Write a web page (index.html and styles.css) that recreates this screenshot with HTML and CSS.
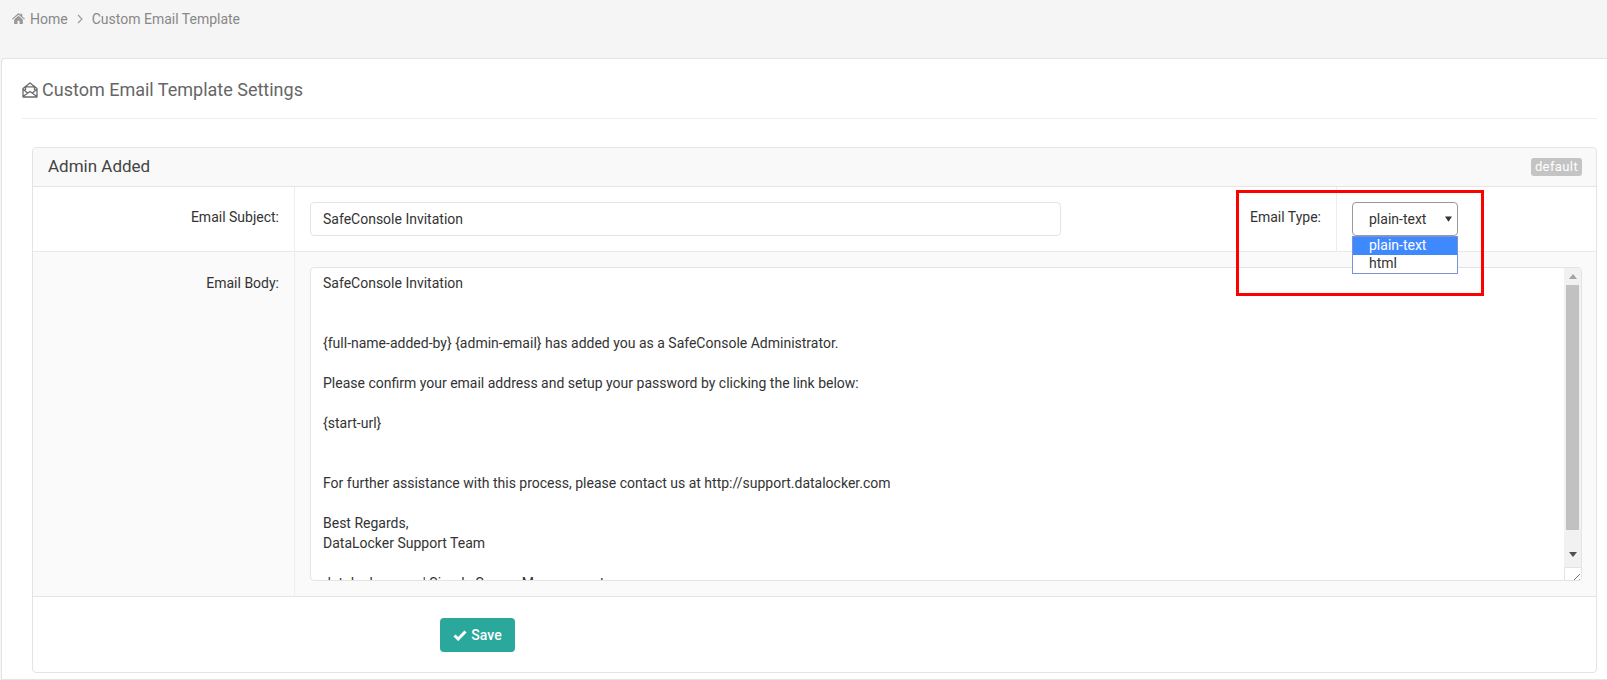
FILE: index.html
```html
<!DOCTYPE html>
<html lang="en">
<head>
<meta charset="utf-8">
<title>Custom Email Template</title>
<link rel="stylesheet" href="styles.css">
</head>
<body>
<nav class="breadcrumb">
  <svg class="home-icon" viewBox="0 0 24 20" width="13" height="11"><path fill="#999" d="M12 0 L15.5 3 V1 H19 V6.2 L24 10.5 L22.6 12 L12 3 L1.4 12 L0 10.5 Z M4 12 L12 5 L20 12 V20 H14 V14 H10 V20 H4 Z"/></svg>
  <span>Home</span>
  <svg class="chevron" viewBox="0 0 6 10" width="6" height="10"><path fill="none" stroke="#999" stroke-width="1.1" d="M1 1 L5 5 L1 9"/></svg>
  <span>Custom Email Template</span>
</nav>
<main class="card">
  <h1 class="page-title">
    <svg class="mail-icon" viewBox="0 0 16 16" width="16" height="16"><path fill="none" stroke="#6a6a6a" stroke-width="1.3" stroke-linejoin="round" d="M1 6.5 L8 1 L15 6.5 V15 H1 Z M3.5 8 V4.8 H12.5 V8 M1 14.5 L8 9.5 L15 14.5 M1 7 L5.5 11 M15 7 L10.5 11"/></svg>
    <span>Custom Email Template Settings</span>
  </h1>
  <section class="panel">
    <header class="panel-head">
      <span class="panel-title">Admin Added</span>
      <span class="badge">default</span>
    </header>
    <div class="row row-subject">
      <label class="label-col label-subject">Email Subject:</label>
      <div class="field-col subject-col">
        <div class="input">SafeConsole Invitation</div>
        <div class="type-label">Email Type:</div>
        <div class="type-field">
          <div class="select"><span>plain-text</span><svg class="caret" viewBox="0 0 8 6" width="7" height="6"><path fill="#333" d="M0 0 H8 L4 6 Z"/></svg>
            <ul class="options">
              <li class="option selected">plain-text</li>
              <li class="option">html</li>
            </ul>
          </div>
        </div>
        <div class="highlight"></div>
      </div>
    </div>
    <div class="row row-body">
      <label class="label-col label-body shaded">Email Body:</label>
      <div class="field-col shaded">
        <div class="textarea">
          <div class="text">
            <p>SafeConsole Invitation</p>
            <p>&nbsp;</p>
            <p>&nbsp;</p>
            <p>{full-name-added-by} {admin-email} has added you as a SafeConsole Administrator.</p>
            <p>&nbsp;</p>
            <p>Please confirm your email address and setup your password by clicking the link below:</p>
            <p>&nbsp;</p>
            <p>{start-url}</p>
            <p>&nbsp;</p>
            <p>&nbsp;</p>
            <p>For further assistance with this process, please contact us at http://support.datalocker.com</p>
            <p>&nbsp;</p>
            <p>Best Regards,</p>
            <p>DataLocker Support Team</p>
            <p>&nbsp;</p>
            <p>datalocker.com | Simple Secure Management</p>
          </div>
          <div class="scrollbar">
            <svg class="arrow" viewBox="0 0 8 5" width="8" height="5"><path fill="#a3a3a3" d="M4 0 L8 5 H0 Z"/></svg>
            <div class="thumb"></div>
            <svg class="arrow arrow-down" viewBox="0 0 8 5" width="8" height="5"><path fill="#505050" d="M0 0 H8 L4 5 Z"/></svg>
            <div class="resizer"><svg viewBox="0 0 10 10" width="10" height="10"><path fill="none" stroke="#777" stroke-width="1" d="M1 10 L10 1 M6 10 L10 6"/></svg></div>
          </div>
        </div>
      </div>
    </div>
    <footer class="panel-foot">
      <button class="save" type="button"><svg viewBox="0 0 14 11" width="14" height="11"><path fill="none" stroke="#fff" stroke-width="3" d="M1.5 5.5 L5.2 9 L12.5 1.5"/></svg>Save</button>
    </footer>
  </section>
</main>
</body>
</html>
```
FILE: styles.css
```css
* { box-sizing: border-box; }
html, body { margin: 0; height: 680px; overflow: hidden; }
body {
  background: #f5f5f5;
  font-family: Roboto, "Liberation Sans", sans-serif;
  font-size: 14px;
  color: #333;
}
.breadcrumb {
  height: 58px;
  padding: 9px 0 0 12px;
  display: flex;
  align-items: flex-start;
  color: #888;
  line-height: 20px;
}
.home-icon { margin: 4px 5px 0 0; }
.chevron { margin: 5px 9px 0 9px; }
.card {
  margin-left: 1px;
  height: 622px;
  background: #fff;
  border: 1px solid #e4e4e4;
  border-right: 0;
  border-radius: 4px 0 0 0;
  padding: 0 10px 0 20px;
}
.page-title {
  margin: 0;
  height: 60px;
  padding-top: 19px;
  border-bottom: 1px solid #eee;
  display: flex;
  align-items: flex-start;
  gap: 4px;
  font-size: 18px;
  font-weight: 400;
  line-height: 24px;
  color: #666;
}
.mail-icon { margin-top: 4px; }
.panel {
  margin: 28px 0 0 10px;
  height: 526px;
  display: flex;
  flex-direction: column;
  border: 1px solid #e4e4e4;
  border-radius: 4px;
}
.panel-head {
  height: 39px;
  flex: none;
  background: #f9f9f9;
  border-bottom: 1px solid #e4e4e4;
  border-radius: 4px 4px 0 0;
  padding: 0 14px 0 15px;
  display: flex;
  align-items: center;
  justify-content: space-between;
}
.panel-title { font-size: 17px; line-height: 20px; margin-top: -2px; color: #444; }
.badge {
  background: #c4c4c4;
  color: #fff;
  font-size: 13px;
  font-weight: 400;
  line-height: 18px;
  height: 18px;
  width: 51px;
  text-align: center;
  letter-spacing: 0.4px;
  border-radius: 3px;
}
.row { display: flex; flex: none; border-bottom: 1px solid #e9e9e9; }
.row-subject { height: 65px; }
.row-body { height: 345px; border-bottom-color: #e4e4e4; }
.label-col {
  width: 262px;
  flex: none;
  padding-right: 15px;
  text-align: right;
  border-right: 1px solid #eee;
  line-height: 20px;
}
.label-subject { padding-top: 20px; }
.label-body { padding-top: 21px; }
.field-col { flex: 1; min-width: 0; padding: 15px; }
.shaded { background: #fafafa; }
.subject-col { display: flex; position: relative; padding-right: 0; }
.input {
  width: 751px;
  height: 34px;
  flex: none;
  background: #fff;
  border: 1px solid #e4e4e4;
  border-radius: 4px;
  padding: 0 12px;
  line-height: 32px;
}
.type-label {
  width: 275px;
  flex: none;
  text-align: right;
  padding-right: 15px;
  line-height: 30px;
}
.type-field {
  flex: 1;
  margin: -15px 0;
  padding: 15px 0 0 15px;
  border-left: 1px solid #eee;
}
.select {
  position: relative;
  width: 106px;
  height: 34px;
  background: #fff;
  border: 1px solid #999;
  border-radius: 4px;
  padding: 0 5px 0 16px;
  line-height: 32px;
  display: flex;
  align-items: center;
  justify-content: space-between;
}
.options {
  position: absolute;
  left: -1px;
  top: 33px;
  width: 106px;
  margin: 0;
  padding: 0;
  list-style: none;
  background: #fff;
  border: 1px solid #7b93d6;
  z-index: 2;
}
.option { height: 18px; line-height: 17px; padding-left: 16px; }
.selected { background: #3f89ff; color: #fff; }
.highlight {
  position: absolute;
  left: 941px;
  top: 3px;
  width: 248px;
  height: 106px;
  border: 3px solid #f00;
  pointer-events: none;
  z-index: 3;
}
.textarea {
  height: 314px;
  width: 1272px;
  background: #fff;
  border: 1px solid #e4e4e4;
  border-radius: 4px;
  display: flex;
  overflow: hidden;
}
.text { flex: 1; min-width: 0; padding: 5px 12px; overflow: hidden; }
.text p { margin: 0; line-height: 20px; }
.scrollbar {
  width: 17px;
  flex: none;
  background: #f1f1f1;
  display: flex;
  flex-direction: column;
  align-items: center;
}
.arrow { margin: 6px 0; flex: none; }
.arrow-down { margin-bottom: 10px; }
.thumb { width: 13px; height: 245px; flex: none; background: #c1c1c1; margin-bottom: 16px; }
.resizer {
  flex: none;
  width: 17px;
  height: 17px;
  background: #fff;
  border-top: 1px solid #e4e4e4;
  border-left: 1px solid #e4e4e4;
  display: flex;
  align-items: flex-end;
  justify-content: flex-end;
  padding: 0 1px 1px 0;
}
.panel-foot { flex: 1; padding: 21px 0 0 407px; }
.save {
  width: 75px;
  height: 34px;
  background: #29a89b;
  color: #fff;
  border: 0;
  border-radius: 4px;
  font: 500 14px Roboto, "Liberation Sans", sans-serif;
  display: flex;
  align-items: center;
  justify-content: center;
  gap: 4px;
  padding: 0;
}
```
